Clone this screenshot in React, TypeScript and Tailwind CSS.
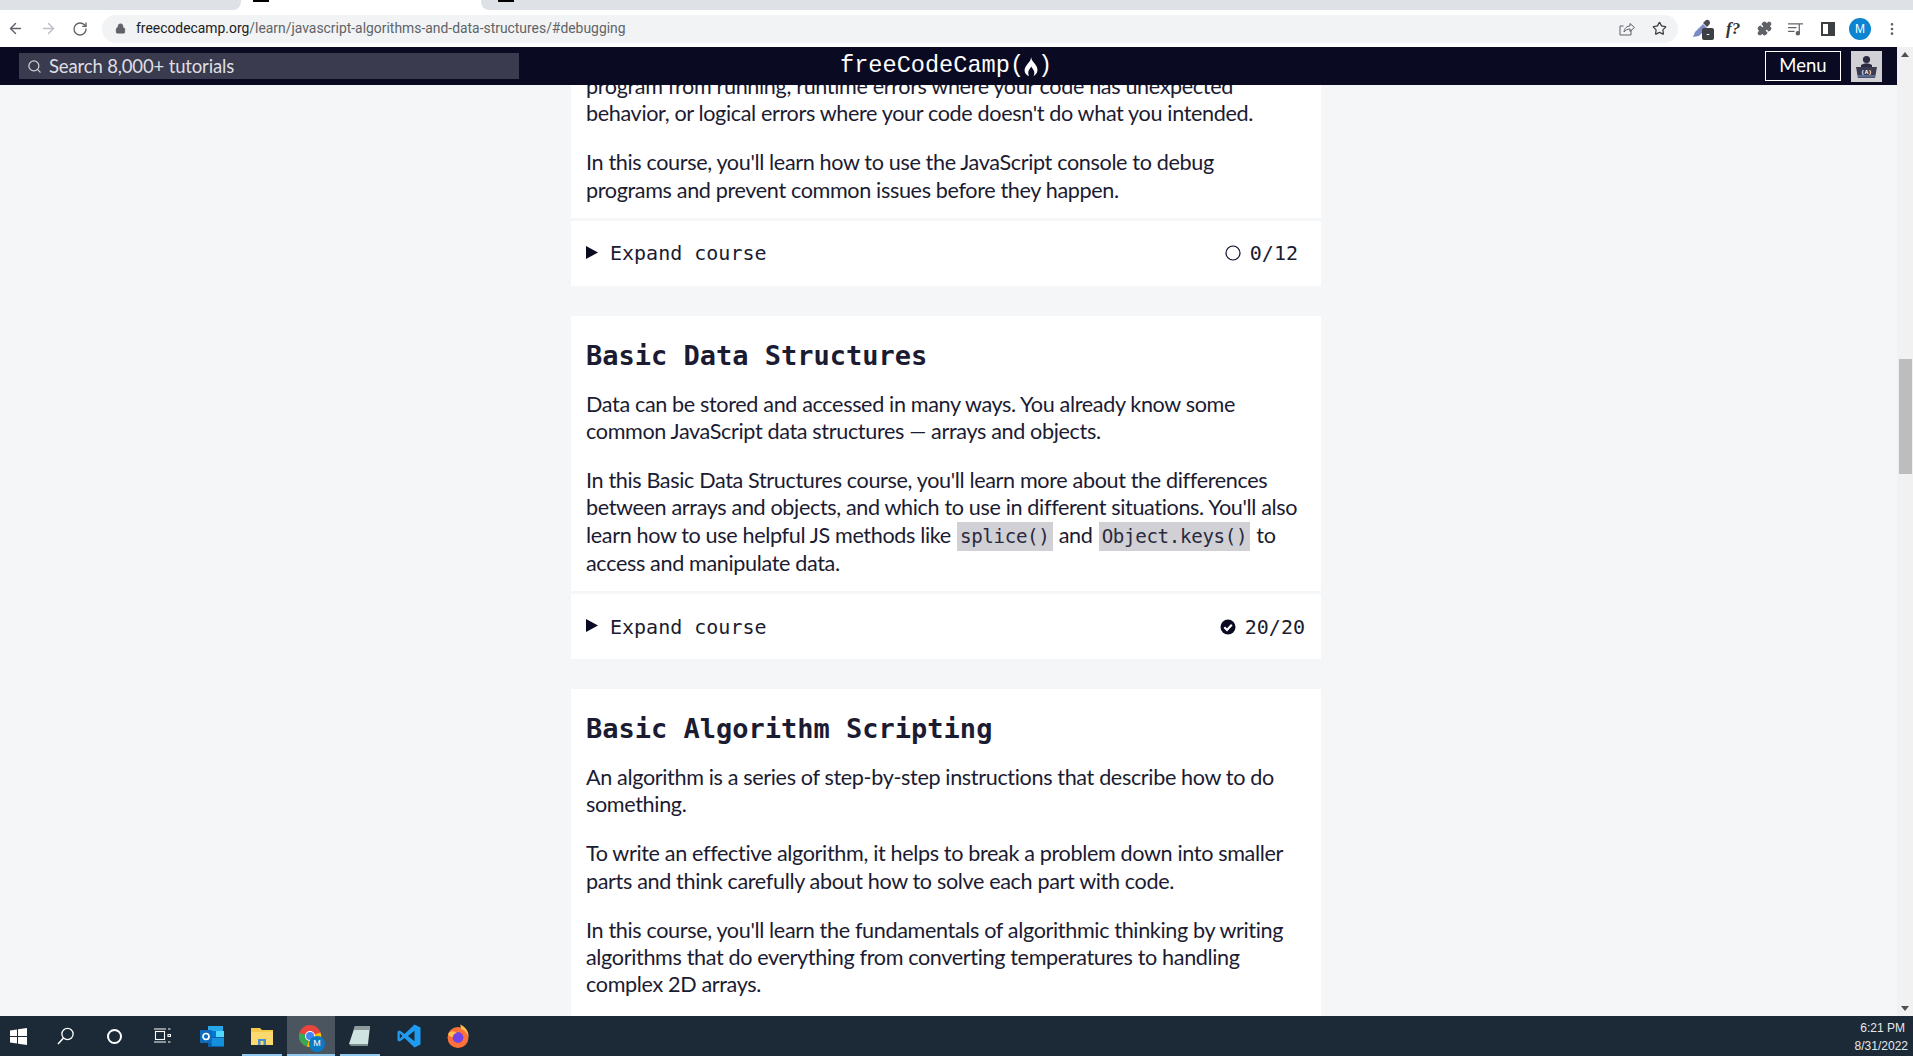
import React from 'react';
import { ArrowLeft, ArrowRight, RotateCw, Lock, Star, Search, EllipsisVertical, Puzzle } from 'lucide-react';

const Code: React.FC<{ children: React.ReactNode }> = ({ children }) => (
  <code className="bg-[#d0d0d5] px-[3px] py-[3px] font-['DejaVu_Sans_Mono',monospace] text-[19.2px] text-[#2a2a40] mx-[1px]">{children}</code>
);

const Para: React.FC<{ children: React.ReactNode }> = ({ children }) => (
  <p className="mb-[22px] text-[21.6px] leading-[27.2px] tracking-[-0.36px] last:mb-0">{children}</p>
);

const ExpandRow: React.FC<{ done?: boolean; count: string }> = ({ done, count }) => (
  <div className={`mt-[3px] flex h-[65px] items-center justify-between bg-white pl-[15px] font-['DejaVu_Sans_Mono',monospace] text-[20px] text-[#1b1b32] ${done ? 'pr-[16px]' : 'pr-[23px]'}`}>
    <div className="flex items-center">
      <svg width="12" height="13" viewBox="0 0 12 13" className="mr-[12px] mb-[2px]"><path d="M0 0 L12 6.5 L0 13 Z" fill="#0a0a23" /></svg>
      <span>Expand course</span>
    </div>
    <div className="flex items-center">
      {done ? (
        <svg width="16" height="16" viewBox="0 0 16 16" className="mr-[9px]">
          <circle cx="8" cy="8" r="7.5" fill="#0a0a23" />
          <path d="M4.3 8.3 L7 11 L11.8 5.8" stroke="#fff" strokeWidth="2.2" fill="none" />
        </svg>
      ) : (
        <svg width="16" height="16" viewBox="0 0 16 16" className="mr-[9px]">
          <circle cx="8" cy="8" r="7" fill="none" stroke="#0a0a23" strokeWidth="1.2" />
        </svg>
      )}
      <span>{count}</span>
    </div>
  </div>
);

const Title: React.FC<{ children: React.ReactNode }> = ({ children }) => (
  <h3 className="mb-[17px] font-['DejaVu_Sans_Mono',monospace] text-[27px] font-bold leading-[36px] text-[#1b1b32]">{children}</h3>
);

const Flame = () => (
  <svg width="14" height="19" viewBox="0 0 14 19">
    <path d="M7 0 C7.5 3 9 4.5 11 7 C13.5 10 14 13 13 15.5 C12 17.5 10.5 18.5 9.5 19 C10.5 17 10.7 15 9.5 13 C9 12 8 11 7.2 9.5 C6.5 11 5 12.5 4.5 14 C4 15.8 4.3 17.5 5 19 C3 18.5 1.5 17 0.8 15 C0 12 1.5 9.5 3.5 7 C5.5 4.5 7.2 3 7 0 Z" fill="#fff" />
  </svg>
);

const Avatar = () => (
  <div className="flex h-[31px] w-[31px] items-center justify-center bg-[#d0d0d5]">
    <svg width="31" height="31" viewBox="0 0 31 31">
      <circle cx="15.5" cy="8.5" r="3.6" fill="#2a2a40" />
      <path d="M10 14 Q15.5 10.5 21 14 L21 16 L10 16 Z" fill="#2a2a40" />
      <path d="M5 16 H26 L24 27 H7 Z" fill="#3b3b4f" />
      <rect x="7" y="24" width="17" height="2.5" fill="#5a6a90" />
      <text x="15.5" y="22.5" textAnchor="middle" fontSize="6" fontWeight="700" fill="#fff" fontFamily="Liberation Mono, monospace">(A)</text>
    </svg>
  </div>
);

const Taskbar = () => (
  <div className="flex h-[40px] shrink-0 items-center justify-between bg-[#1c2a37]">
    <div className="flex h-full items-center">
      {/* start */}
      <div className="flex w-[42px] pl-[10px]">
        <svg width="17" height="17" viewBox="0 0 17 17"><path d="M0 2.4 L7 1.4 V8 H0 Z M8 1.2 L17 0 V8 H8 Z M0 9 H7 V15.6 L0 14.6 Z M8 9 H17 V17 L8 15.8 Z" fill="#fff" /></svg>
      </div>
      <div className="flex w-[48px] justify-center">
        <svg width="18" height="18" viewBox="0 0 18 18"><circle cx="10.5" cy="7" r="5.6" fill="none" stroke="#fff" strokeWidth="1.3" /><path d="M6.5 11 L1 17" stroke="#fff" strokeWidth="1.5" /></svg>
      </div>
      <div className="flex w-[48px] justify-center">
        <div className="h-[15px] w-[15px] rounded-full border-2 border-white" />
      </div>
      <div className="flex w-[48px] justify-center">
        <svg width="17" height="16" viewBox="0 0 17 16" fill="none" stroke="#fff" strokeWidth="1.1"><rect x="1.5" y="3.5" width="9" height="8" /><path d="M0 1 H12 M0 14 H12 M14 1 H16.5 M14 6.5 H16.5 V8.5 H14 Z M14 14 H16.5" /></svg>
      </div>
      {/* outlook */}
      <div className="flex w-[52px] justify-center">
        <svg width="24" height="21" viewBox="0 0 24 21">
          <rect x="8" y="0" width="15" height="9" fill="#28a8ea" />
          <rect x="8" y="5" width="8" height="7" fill="#0078d4" />
          <rect x="16" y="5" width="8" height="7" fill="#50d9ff" />
          <path d="M8 11 L24 11 V21 H8 Z" fill="#0a5ea8" />
          <path d="M10 12 L24 12 V20 H12 Z" fill="#1490df" />
          <rect x="0" y="4" width="12" height="13" rx="1" fill="#0f6cbd" />
          <circle cx="6" cy="10.5" r="3" fill="none" stroke="#fff" strokeWidth="1.7" />
        </svg>
      </div>
      {/* explorer */}
      <div className="relative flex h-full w-[47px] items-center justify-center">
        <svg width="22" height="19" viewBox="0 0 22 19">
          <path d="M0 1 H9 L11 3 H22 V18 H0 Z" fill="#f4c94c" />
          <rect x="0" y="5" width="22" height="13" fill="#fbd96e" />
          <rect x="7" y="12" width="8" height="6" fill="#4a8fc9" />
          <rect x="9.5" y="14" width="3" height="4" fill="#fbd96e" />
        </svg>
        <div className="absolute bottom-0 left-[4px] h-[2px] w-[40px] bg-[#8fc7ee]" />
      </div>
      {/* chrome, active */}
      <div className="relative ml-[2px] flex h-full w-[48px] items-center justify-center bg-[#4a5560]">
        <svg width="24" height="24" viewBox="0 0 24 24" className="mr-[3px]">
          <circle cx="12" cy="12" r="11" fill="#e8453c" />
          <path d="M12 12 L1.5 9 A11 11 0 0 0 9 22.6 Z" fill="#34a853" />
          <path d="M12 12 L22.5 8.5 A11 11 0 0 1 9 22.6 Z" fill="#fbbc05" />
          <circle cx="12" cy="12" r="5" fill="#fff" />
          <circle cx="12" cy="12" r="4" fill="#4285f4" />
        </svg>
        <div className="absolute left-[22px] top-[20px] flex h-[16px] w-[16px] items-center justify-center rounded-full bg-[#0b7bc4] font-['Liberation_Sans',sans-serif] text-[9px] text-white">M</div>
        <div className="absolute bottom-0 left-0 h-[2px] w-full bg-[#8fc7ee]" />
      </div>
      {/* notes app */}
      <div className="relative flex h-full w-[48px] items-center justify-center">
        <svg width="23" height="22" viewBox="0 0 23 22">
          <path d="M7 1 L22 1 L20 19 L1 19 Z" fill="#cfe4e2" />
          <path d="M7 1 L22 1 L21.6 5 L5.5 5 Z" fill="#8f9a9c" />
          <path d="M1 19 L20 19 L20 21 L3 21 Z" fill="#7b8f8c" />
        </svg>
        <div className="absolute bottom-0 left-[5px] h-[2px] w-[40px] bg-[#8fc7ee]" />
      </div>
      {/* vscode */}
      <div className="ml-[2px] flex w-[48px] justify-center">
        <svg width="24" height="24" viewBox="0 0 24 24">
          <path d="M17.5 0.5 L23.5 3.5 V20.5 L17.5 23.5 L7.5 14 L2.8 17.6 L0.5 16.4 V7.6 L2.8 6.4 L7.5 10 Z M17.5 6.8 L11 12 L17.5 17.2 Z M2.8 9.2 V14.8 L5.5 12 Z" fill="#1f9cf0" />
        </svg>
      </div>
      {/* firefox */}
      <div className="ml-[1px] flex w-[48px] justify-center">
        <svg width="24" height="24" viewBox="0 0 24 24">
          <circle cx="12" cy="13.5" r="10.5" fill="#ff7139" />
          <path d="M14 0.5 C20 3 23 8 22.5 13 C20.5 8 18 6 15 5 C15 3 14.5 2 14 0.5 Z" fill="#ffbd4f" />
          <circle cx="12" cy="13.5" r="5.4" fill="#7542e5" />
          <path d="M2 10 C5 6 8 7 11 9 C8 9.5 7 11 7 13 C5 13.5 3 12 2 10 Z" fill="#ffbd4f" />
        </svg>
      </div>
    </div>
    <div className="pr-[5px] pt-[1px] text-right font-['Liberation_Sans',sans-serif] text-[12px] leading-[18px] text-[#e6e9ec]">
      <div className="pr-[3px]">6:21 PM</div>
      <div>8/31/2022</div>
    </div>
  </div>
);

export default function App() {
  return (
    <div className="flex h-[1056px] w-[1913px] flex-col overflow-hidden bg-[#f5f6f7] font-['Lato',sans-serif] text-[#1b1b32]">
      {/* tab strip */}
      <div className="flex h-[10px] shrink-0 bg-white">
        <div className="w-[241px] rounded-br-lg bg-[#dee1e6]" />
        <div className="w-[240px] pl-[12px]"><div className="h-[2px] w-[16px] bg-black" /></div>
        <div className="flex-1 rounded-bl-lg bg-[#dee1e6] pl-[17px]"><div className="h-[2px] w-[16px] bg-black" /></div>
      </div>

      {/* browser toolbar */}
      <div className="flex h-[37px] shrink-0 items-center bg-white pl-[7px]">
        <ArrowLeft size={17} className="text-[#5f6368]" />
        <ArrowRight size={17} className="ml-[16px] text-[#bcc0c4]" />
        <RotateCw size={16} className="ml-[15px] text-[#5f6368]" />
        <div className="ml-[14px] flex h-[28px] w-[1576px] items-center rounded-full bg-[#f1f3f4] pl-[13px] pr-[11px] font-['Roboto',sans-serif] text-[13.9px]">
          <Lock size={11} fill="#5f6368" className="text-[#5f6368]" />
          <span className="ml-[10px] text-[#202124]">freecodecamp.org</span>
          <span className="text-[#5f6368]">/learn/javascript-algorithms-and-data-structures/#debugging</span>
          <div className="ml-auto flex items-center">
            <svg width="16" height="16" viewBox="0 0 16 16" fill="none" stroke="#5f6368" strokeWidth="1"><path d="M12 8.5 V14 H1 V5 H4.5 M5 11 C5.5 7 8 5 11 5 V2.5 L15.5 6.5 L11 10.5 V8 C8.5 8 6.5 9 5 11 Z" /></svg>
            <Star size={15} className="ml-[17px] text-[#3c4043]" />
          </div>
        </div>
        <div className="relative ml-[14px] h-[20px] w-[22px]">
          <svg width="20" height="20" viewBox="0 0 20 20"><path d="M1 18 L3 13 L11 5 L15 9 L7 17 Z" fill="#7b8cc4" /><path d="M11 4 L13 2 Q15 0 17 1.5 Q19 3.5 17 6 L15 8 Z" fill="#4a4a55" /></svg>
          <div className="absolute left-[10px] top-[9px] flex h-[12px] w-[12px] items-center justify-center rounded-[2px] bg-[#3c4043] text-[9px] font-bold leading-none text-white">-</div>
        </div>
        <span className="ml-[12px] w-[14px] font-['Liberation_Serif',serif] text-[17px] font-bold italic text-[#2f3337]">f?</span>
        <Puzzle size={15} fill="#5f6368" className="ml-[17px] text-[#5f6368]" />
        <svg width="16" height="14" viewBox="0 0 17 15" className="ml-[16px]" stroke="#5f6368" strokeWidth="1.3" fill="none"><path d="M0 2 H12 M0 6 H9 M0 10 H7 M12 2 V12" /><circle cx="10.5" cy="12" r="1.8" fill="#5f6368" /><path d="M12 2 H16" /></svg>
        <div className="ml-[17px] flex h-[14px] w-[14px] border-2 border-[#3c4043]"><div className="ml-auto h-full w-[5px] bg-[#3c4043]" /></div>
        <div className="ml-[14px] flex h-[22px] w-[22px] items-center justify-center rounded-full bg-[#0b84d1] font-['Liberation_Sans',sans-serif] text-[12px] text-white">M</div>
        <EllipsisVertical size={16} className="ml-[13px] text-[#5f6368]" />
      </div>

      <div className="flex min-h-0 flex-1">
        <div className="relative min-w-0 flex-1 overflow-hidden">
          {/* fcc nav */}
          <div className="absolute inset-x-0 top-0 z-10 flex h-[38px] items-center bg-[#0a0a23] pl-[19px] pr-[15px]">
            <div className="flex h-[26px] w-[500px] items-center bg-[#3b3b4f] pl-[8px] pt-[1px] text-[18.5px] tracking-[-0.15px] text-[#dfdfe2]">
              <Search size={15} className="mr-[7px] text-[#d0d0d5]" />
              Search 8,000+ tutorials
            </div>
            <div className="ml-[321px] flex items-center font-['Liberation_Mono',monospace] text-[23.6px] leading-none text-white">
              freeCodeCamp(<Flame />)
            </div>
            <div className="ml-auto flex items-center">
              <div className="flex h-[30px] w-[76px] items-center justify-center border border-white text-[18.5px] text-white">Menu</div>
              <div className="ml-[10px]"><Avatar /></div>
            </div>
          </div>

          {/* curriculum */}
          <div className="ml-[571px] w-[750px]">
            <div className="bg-white px-[15px] pt-[26px] pb-[14px]">
              <Para>program from running, runtime errors where your code has unexpected<br />behavior, or logical errors where your code doesn't do what you intended.</Para>
              <Para>In this course, you'll learn how to use the JavaScript console to debug<br />programs and prevent common issues before they happen.</Para>
            </div>
            <ExpandRow count="0/12" />

            <div className="mt-[30px] bg-white px-[15px] pt-[22px] pb-[14px]">
              <Title>Basic Data Structures</Title>
              <Para>Data can be stored and accessed in many ways. You already know some<br />common JavaScript data structures — arrays and objects.</Para>
              <Para>In this Basic Data Structures course, you'll learn more about the differences between arrays and objects, and which to use in different situations. You'll also learn how to use helpful JS methods like <Code>splice()</Code> and <Code>Object.keys()</Code> to access and manipulate data.</Para>
            </div>
            <ExpandRow done count="20/20" />

            <div className="mt-[30px] bg-white px-[15px] pt-[22px] pb-[60px]">
              <Title>Basic Algorithm Scripting</Title>
              <Para>An algorithm is a series of step-by-step instructions that describe how to do something.</Para>
              <Para>To write an effective algorithm, it helps to break a problem down into smaller parts and think carefully about how to solve each part with code.</Para>
              <Para>In this course, you'll learn the fundamentals of algorithmic thinking by writing algorithms that do everything from converting temperatures to handling complex 2D arrays.</Para>
            </div>
          </div>
        </div>

        {/* scrollbar */}
        <div className="flex w-[16px] shrink-0 flex-col items-center bg-[#f1f1f1] pt-[5px]">
          <div className="h-0 w-0 border-x-[4px] border-b-[5px] border-x-transparent border-b-[#505050]" />
          <div className="mt-[302px] h-[115px] w-[13px] bg-[#bdbdbd]" />
          <div className="mt-auto mb-[5px] h-0 w-0 border-x-[4px] border-t-[5px] border-x-transparent border-t-[#505050]" />
        </div>
      </div>

      <Taskbar />
    </div>
  );
}
